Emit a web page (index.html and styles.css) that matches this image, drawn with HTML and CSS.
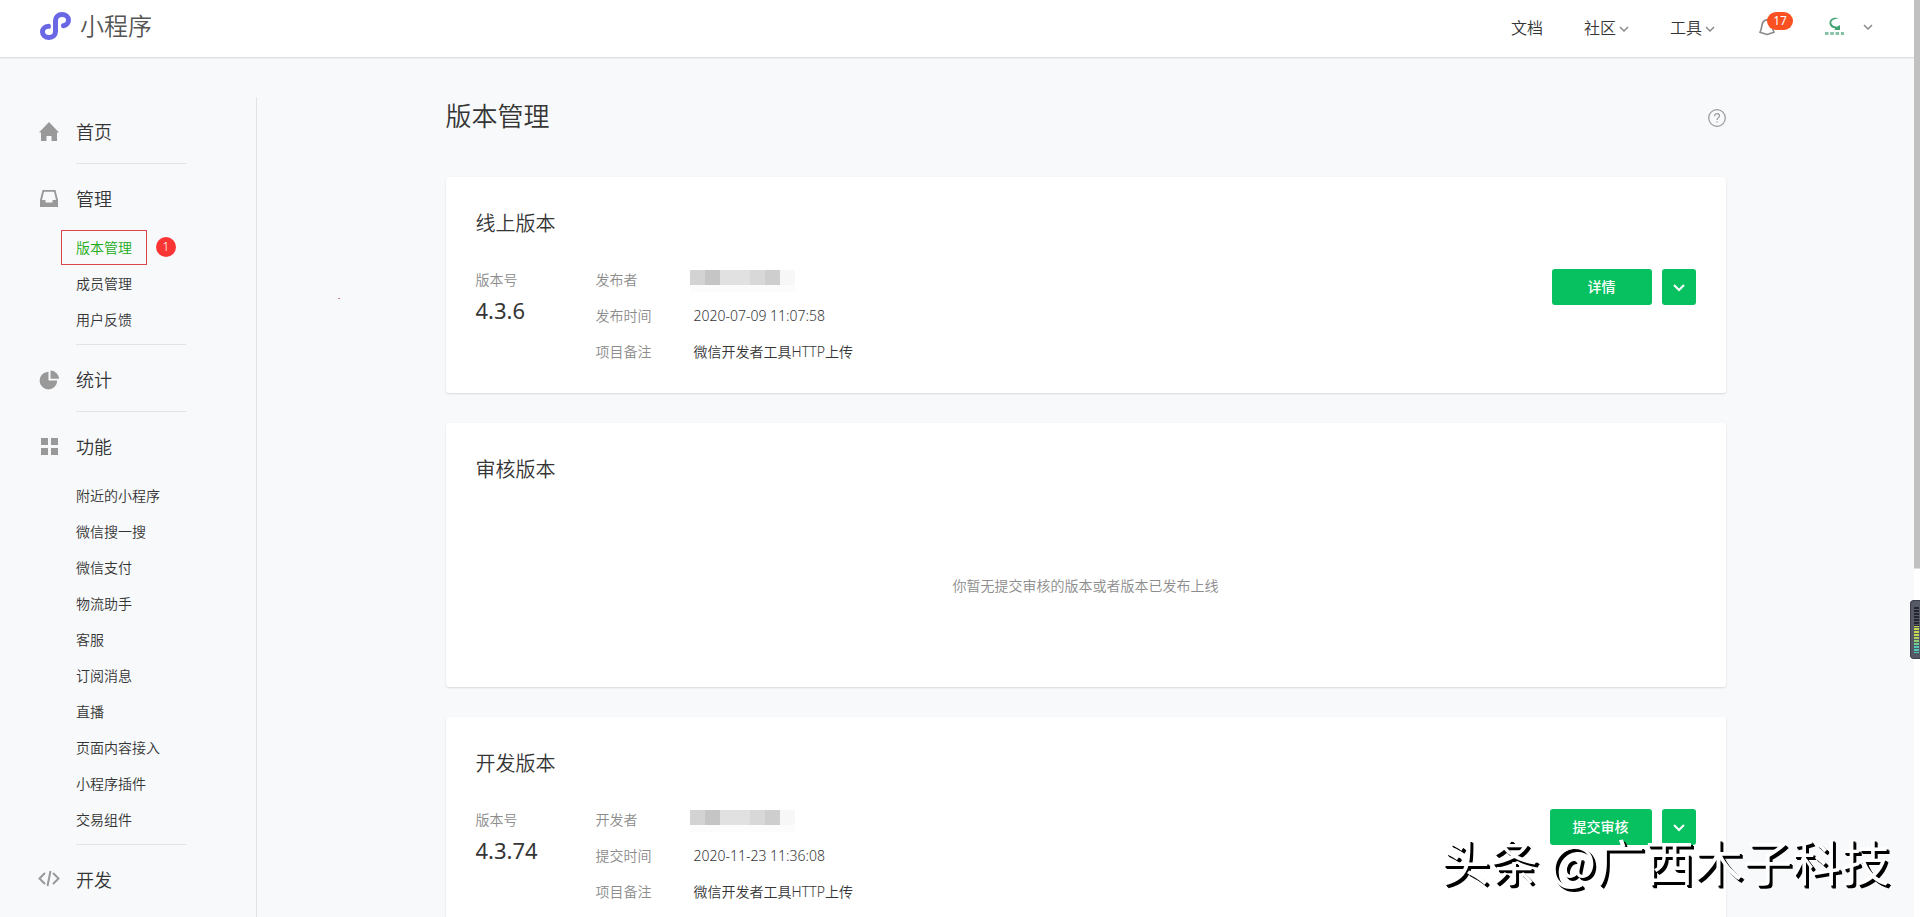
FILE: index.html
```html
<!DOCTYPE html>
<html lang="zh-CN">
<head>
    <meta charset="UTF-8">
    <meta name="viewport" content="width=device-width, initial-scale=1.0">
    <title>小程序</title>
    <link rel="stylesheet" href="styles.css">
</head>
<body>

<header class="header">
    <a class="logo" href="#">
        <svg width="32" height="28" viewBox="0 0 32 28" fill="none" stroke="#6a67e4" stroke-width="5" stroke-linecap="round">
            <path d="M8.5 14.3C4.8 14.5 2.5 16.8 2.5 19.8C2.5 23 5.2 25.500 9 25.500C13 25.500 15.500 22.800 15.500 19.500V8.500C15.500 5.200 18.200 2.500 22 2.500C25.800 2.500 28.500 5 28.500 8C28.500 11.200 26.300 13.300 23.500 13.700"/>
        </svg>
        <span>小程序</span>
    </a>
    <nav class="top-nav">
        <a href="#">文档</a>
        <a href="#">社区<svg class="arrow" width="10" height="6" viewBox="0 0 10 6"><path d="M1 1l4 4 4-4"/></svg></a>
        <a href="#">工具<svg class="arrow" width="10" height="6" viewBox="0 0 10 6"><path d="M1 1l4 4 4-4"/></svg></a>
        <a class="bell" href="#" aria-label="通知">
            <svg width="16" height="18" viewBox="0 0 16 18" fill="none" stroke="#8a8a8a" stroke-width="1.700" stroke-linejoin="round">
                <path d="M1 14.300C2.200 12 2.500 11 2.800 8C3.200 4 5 2 8 1.800C11 2 12.800 4 13.200 8C13.500 11 13.800 12 15 14.300L8 16.500Z"/>
            </svg>
            <span class="badge">17</span>
        </a>
        <a class="account" href="#" aria-label="账号">
            <svg width="22" height="22" viewBox="0 0 22 22">
                <path d="M16 2.500C12 .8 6.500 2.500 6.500 7C6.500 10 9 12.200 12 12L11.500 14H17V9L14 10.700C11 10.500 8.300 9 8.300 6.500C8.500 4 12 2.600 16 2.500Z" fill="#3fa373"/>
                <path d="M2 17.500H21" stroke="#4fa97b" stroke-width="3" stroke-dasharray="3.500 1.800" opacity=".7"/>
            </svg>
            <svg class="arrow" width="10" height="6" viewBox="0 0 10 6"><path d="M1 1l4 4 4-4"/></svg>
        </a>
    </nav>
</header>

<div class="layout">
    <aside class="sidebar">
        <div class="menu-group">
            <a class="menu-title" href="#">
                <svg width="20" height="20" viewBox="0 0 20 20"><path d="M10 0L20 10.500H18V19H12.500V14H7.500V19H2V10.500H0Z"/></svg>
                首页
            </a>
        </div>
        <div class="menu-group has-sub">
            <a class="menu-title" href="#">
                <svg width="20" height="20" viewBox="0 0 20 20"><path fill-rule="evenodd" d="M3.500 1H16.500L19 11V18H1V11ZM5 2.700L3 11H6.500V13.500H13.500V11H17L15 2.700Z"/></svg>
                管理
            </a>
            <ul class="sub-menu">
                <li><a class="current" href="#">版本管理</a><span class="step">1</span></li>
                <li><a href="#">成员管理</a></li>
                <li><a href="#">用户反馈</a></li>
            </ul>
        </div>
        <div class="menu-group">
            <a class="menu-title" href="#">
                <svg width="20" height="20" viewBox="0 0 20 20"><path d="M9.500 1.800V10.500H18.200A8.800 8.800 0 1 1 9.500 1.800Z"/><path d="M11.500 .5A8.600 8.600 0 0 1 20 8.700H11.500Z"/></svg>
                统计
            </a>
        </div>
        <div class="menu-group has-sub">
            <a class="menu-title" href="#">
                <svg width="20" height="20" viewBox="0 0 20 20"><path d="M2 1h7v7H2zM12 1h7v7h-7zM2 11h7v7H2zM12 11h7v7h-7z"/></svg>
                功能
            </a>
            <ul class="sub-menu">
                <li><a href="#">附近的小程序</a></li>
                <li><a href="#">微信搜一搜</a></li>
                <li><a href="#">微信支付</a></li>
                <li><a href="#">物流助手</a></li>
                <li><a href="#">客服</a></li>
                <li><a href="#">订阅消息</a></li>
                <li><a href="#">直播</a></li>
                <li><a href="#">页面内容接入</a></li>
                <li><a href="#">小程序插件</a></li>
                <li><a href="#">交易组件</a></li>
            </ul>
        </div>
        <div class="menu-group">
            <a class="menu-title" href="#">
                <svg class="code" width="22" height="20" viewBox="0 0 22 20"><path d="M7 4L1.500 9.500L7 15M15 4L20.500 9.500L15 15M12.500 2L9.500 17"/></svg>
                开发
            </a>
        </div>
    </aside>

    <main class="main">
        <div class="content">
            <div class="page-head">
                <h1>版本管理</h1>
                <a href="#" aria-label="帮助">
                    <svg width="18" height="18" viewBox="0 0 18 18" fill="none" stroke="#999" stroke-width="1.200">
                        <circle cx="9" cy="9" r="8.300"/>
                        <path d="M6.500 7.200C6.500 5.500 7.500 4.700 9 4.700S11.500 5.600 11.500 7C11.500 8.600 9 8.800 9 11M9 12.200V13.600"/>
                    </svg>
                </a>
            </div>

            <section class="card">
                <h2>线上版本</h2>
                <div class="card-body">
                    <div class="version">
                        <span>版本号</span>
                        <strong>4.3.6</strong>
                    </div>
                    <dl class="info">
                        <dt>发布者</dt>
                        <dd><span class="mosaic"><i></i><i></i><i></i><i></i><i></i><i></i><i></i></span></dd>
                        <dt>发布时间</dt>
                        <dd>2020-07-09 11:07:58</dd>
                        <dt>项目备注</dt>
                        <dd>微信开发者工具HTTP上传</dd>
                    </dl>
                    <div class="actions">
                        <button class="btn">详情</button>
                        <button class="btn more" aria-label="更多"><svg class="arrow" width="12" height="8" viewBox="0 0 12 8"><path d="M1 1l5 5 5-5"/></svg></button>
                    </div>
                </div>
            </section>

            <section class="card">
                <h2>审核版本</h2>
                <p class="empty">你暂无提交审核的版本或者版本已发布上线</p>
            </section>

            <section class="card">
                <h2>开发版本</h2>
                <div class="card-body">
                    <div class="version">
                        <span>版本号</span>
                        <strong>4.3.74</strong>
                    </div>
                    <dl class="info">
                        <dt>开发者</dt>
                        <dd><span class="mosaic"><i></i><i></i><i></i><i></i><i></i><i></i><i></i></span></dd>
                        <dt>提交时间</dt>
                        <dd>2020-11-23 11:36:08</dd>
                        <dt>项目备注</dt>
                        <dd>微信开发者工具HTTP上传</dd>
                    </dl>
                    <div class="actions">
                        <button class="btn">提交审核</button>
                        <button class="btn more" aria-label="更多"><svg class="arrow" width="12" height="8" viewBox="0 0 12 8"><path d="M1 1l5 5 5-5"/></svg></button>
                    </div>
                </div>
            </section>
        </div>
    </main>
</div>

<div class="scrollbar"></div>
<div class="meter"></div>
<div class="speck"></div>
<div class="watermark">头条 @广西木子科技</div>

</body>
</html>
```
FILE: styles.css
```css
* {
    box-sizing: border-box;
}
body {
    font-family: "Noto Sans", "Noto Sans CJK SC", sans-serif;
    font-size: 14px;
    font-weight: 350;
    margin: 0;
    padding-right: 6px;
    height: 100vh;
    overflow: hidden;
    display: flex;
    flex-direction: column;
    color: #353535;
    background-color: #f8f9fb;
}
a {
    color: inherit;
    text-decoration: none;
}
h1, h2, p, ul, dl, dd {
    margin: 0;
    padding: 0;
}
h1, h2 {
    font-weight: 350;
}
.arrow {
    fill: none;
    stroke: #8a8a8a;
    stroke-width: 1.5;
}

/* header */
.header {
    flex: none;
    display: flex;
    justify-content: space-between;
    height: 58px;
    padding: 0 41px 0 40px;
    background-color: #fff;
    border-bottom: 1px solid #e0e1e3;
    box-shadow: 0 1px 1px #eeeff1;
}
.logo {
    display: flex;
    align-items: center;
    gap: 8px;
    height: 52px;
    font-size: 24px;
    color: #555;
}
.logo span {
    margin-bottom: 4px;
}
.top-nav {
    display: flex;
    align-items: center;
    gap: 41px;
    height: 54px;
    font-size: 16px;
}
.top-nav a {
    display: flex;
    align-items: center;
    gap: 3px;
}
.top-nav .arrow {
    margin-top: 3px;
}
.top-nav .bell {
    position: relative;
    width: 34px;
    margin-left: 3px;
}
.badge {
    position: absolute;
    left: 8px;
    top: -6px;
    width: 26px;
    border-radius: 9px;
    background-color: #fa5022;
    color: #fff;
    font-size: 12px;
    font-weight: 400;
    line-height: 18px;
    text-align: center;
}
.top-nav .account {
    margin-left: -11px;
    gap: 18px;
}
.top-nav .account .arrow {
    margin-top: 0;
}

/* sidebar */
.layout {
    flex: 1;
    display: flex;
    min-height: 0;
}
.sidebar {
    flex: none;
    width: 257px;
    margin-top: 39px;
    padding: 16px 70px 0 39px;
    border-right: 1px solid #e1e3e5;
}
.menu-group {
    padding-bottom: 15px;
    margin-bottom: 16px;
    background: linear-gradient(#e1e3e5, #e1e3e5) 37px 100% / 110px 1px no-repeat;
}
.menu-group.has-sub {
    padding-bottom: 8px;
}
.menu-group:last-child {
    background: none;
}
.menu-title {
    display: flex;
    align-items: center;
    gap: 17px;
    height: 36px;
    font-size: 18px;
}
.menu-title svg {
    margin-top: 1px;
    fill: #999;
}
.menu-title .code {
    margin: 0 -1px;
    fill: none;
    stroke: #999;
    stroke-width: 2;
}
.sub-menu {
    list-style: none;
    margin-top: 13px;
    padding-left: 37px;
}
.sub-menu li {
    display: flex;
    align-items: center;
    height: 36px;
}
.sub-menu .current {
    margin-left: -15px;
    padding: 0 14px;
    border: 1px solid #d9464c;
    line-height: 33px;
    color: #1aad19;
}
.step {
    width: 20px;
    margin-left: 9px;
    border-radius: 50%;
    background-color: #fa3534;
    color: #fff;
    font-size: 12px;
    line-height: 20px;
    text-align: center;
}

/* content */
.main {
    flex: 1;
    padding: 41px 30px 0;
}
.content {
    max-width: 1280px;
    margin: 0 auto;
}
.page-head {
    display: flex;
    justify-content: space-between;
    align-items: center;
    height: 36px;
    margin-bottom: 42px;
}
.page-head svg {
    display: block;
    margin-top: 2px;
}
h1 {
    margin-bottom: 4px;
    font-size: 26px;
}
.card {
    margin-bottom: 30px;
    padding: 31px 30px 23px;
    border-radius: 3px;
    background-color: #fff;
    box-shadow: 0 1px 2px #d8dadc;
}
.card h2 {
    font-size: 20px;
    line-height: 32px;
}
.card-body {
    display: flex;
    margin-top: 22px;
    line-height: 36px;
}
.version {
    width: 120px;
    color: #8c8c8c;
}
.version strong {
    display: block;
    font-size: 22px;
    font-weight: 400;
    line-height: 24px;
    color: #353535;
}
.info {
    flex: 1;
    display: grid;
    grid-template-columns: 98px 1fr;
}
.info dt {
    color: #8c8c8c;
}
.mosaic {
    display: flex;
    width: 105px;
    margin: 8px 0 0 -4px;
}
.mosaic i {
    width: 15px;
    height: 22px;
    border-bottom: 7px solid #fcfcfc;
    background-color: #e1e1e1;
}
.mosaic i:nth-child(1) {
    background-color: #d3d3d3;
}
.mosaic i:nth-child(2) {
    background-color: #c5c5c5;
}
.mosaic i:nth-child(5) {
    background-color: #d8d8d8;
}
.mosaic i:nth-child(6) {
    background-color: #cecece;
}
.mosaic i:nth-child(7) {
    background-color: #f7f7f7;
}
.actions {
    display: flex;
    align-items: flex-start;
    gap: 10px;
    padding-top: 7px;
}
.btn {
    min-width: 100px;
    height: 36px;
    padding: 0 23px 2px;
    border: none;
    border-radius: 3px;
    background-color: #07c160;
    color: #fff;
    font-family: inherit;
    font-size: 14px;
    font-weight: 500;
    cursor: pointer;
}
.btn.more {
    min-width: 34px;
    padding: 0 0 2px;
}
.btn .arrow {
    stroke: #fff;
    stroke-width: 2;
}
.empty {
    padding: 91px 0 70px;
    line-height: 17px;
    text-align: center;
    color: #8c8c8c;
}

/* things floating over the page */
.scrollbar {
    position: fixed;
    top: 0;
    right: 0;
    width: 6px;
    height: 100vh;
    background: linear-gradient(#c1c1c1, #c1c1c1) 0 0 / 6px 62% no-repeat #fff;
}
.meter {
    position: fixed;
    right: 0;
    top: 600px;
    width: 10px;
    height: 59px;
    border: 1px solid #3c3d49;
    border-right: none;
    border-radius: 4px 0 0 4px;
    background-color: #555865;
}
.meter::before {
    content: "";
    position: absolute;
    left: 3px;
    top: 6px;
    width: 5px;
    height: 46px;
    background:
        repeating-linear-gradient(transparent 0 2px, #555865 2px 3px),
        linear-gradient(#25262f 0 19px, #c6d84f 19px 28px, #8fd070 34px, #4fc9b5 40px);
}
.speck {
    position: fixed;
    left: 338px;
    top: 298px;
    width: 2px;
    height: 1px;
    background-color: #c08080;
}
.watermark {
    position: fixed;
    right: 30px;
    bottom: 22px;
    color: #fff;
    font-family: "Noto Sans CJK SC", sans-serif;
    font-size: 49px;
    font-weight: 400;
    line-height: 70px;
    text-shadow: 2px 2px 0 #000, 3px 3px 0 #000;
}
```
